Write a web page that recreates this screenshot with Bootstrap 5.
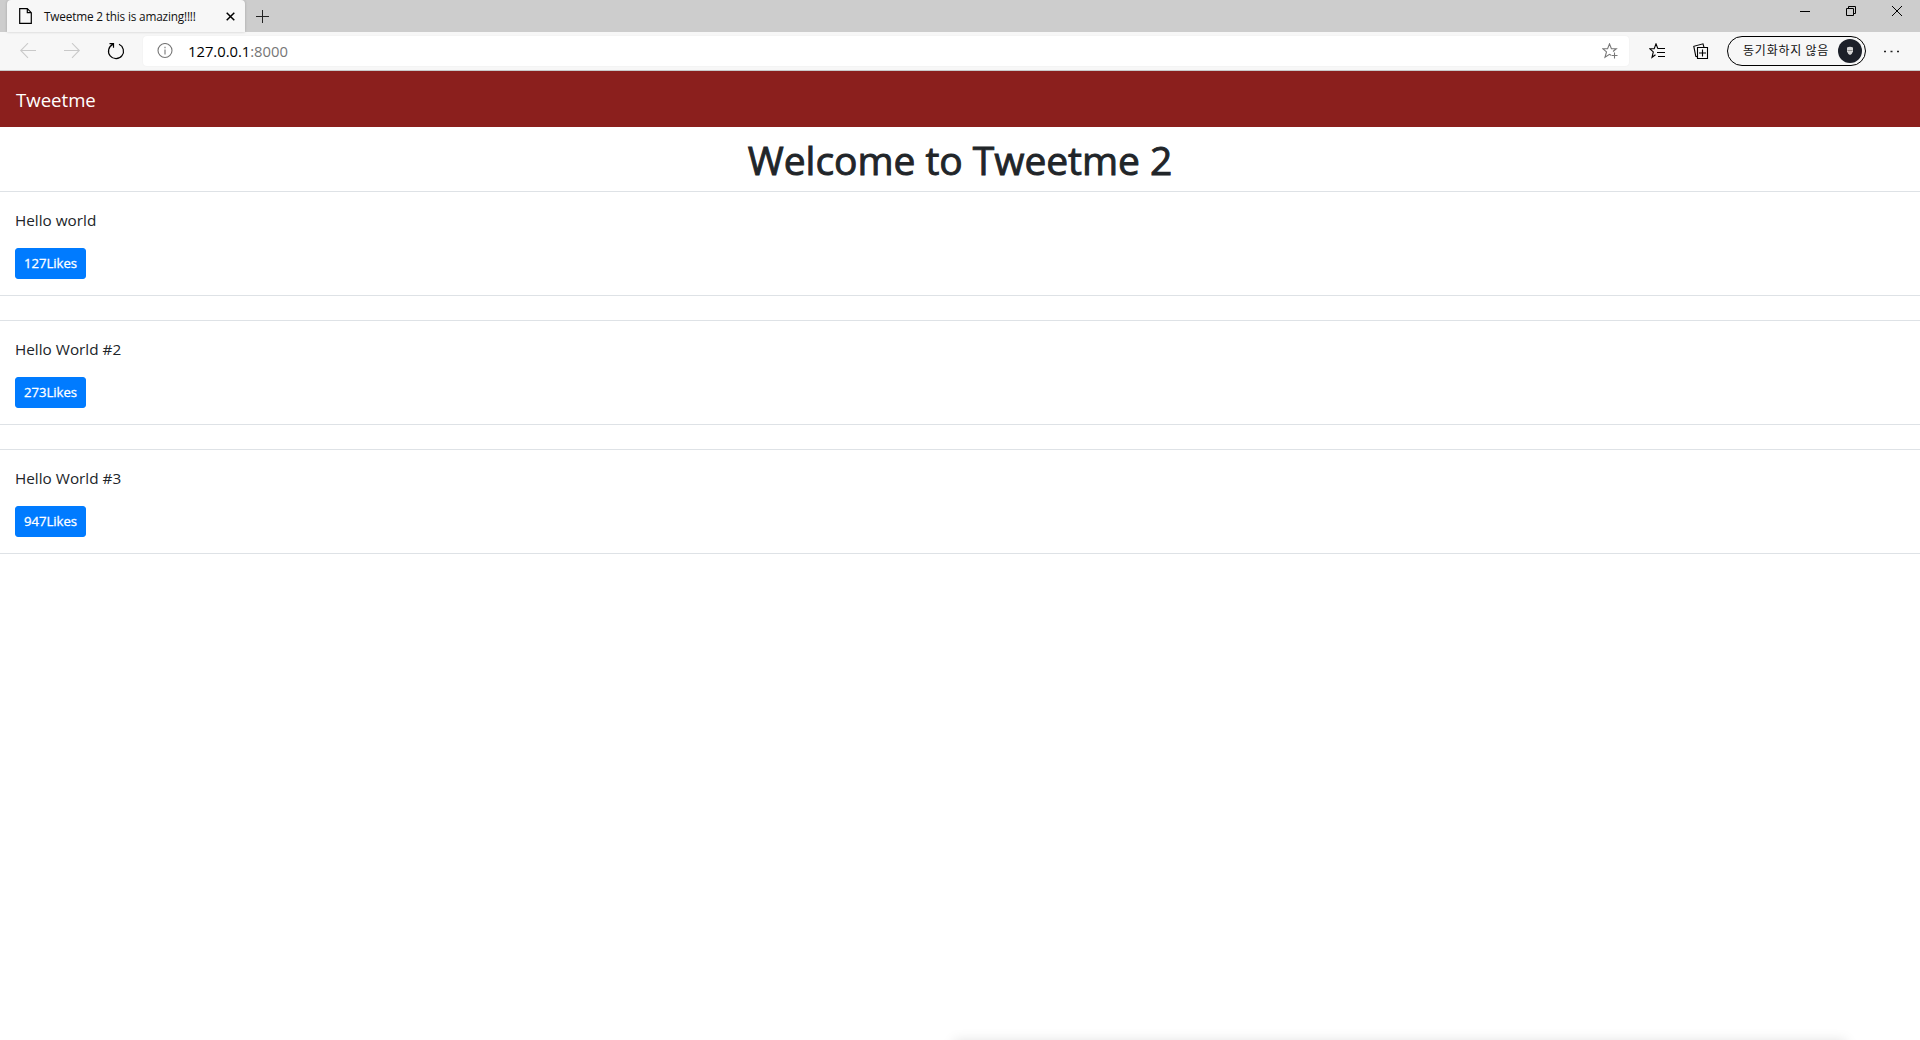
<!DOCTYPE html>
<html lang="en">
<head>
<meta charset="utf-8">
<title>Tweetme 2 this is amazing!!!!</title>
<link href="https://cdn.jsdelivr.net/npm/bootstrap@5.3.0/dist/css/bootstrap.min.css" rel="stylesheet">
<style>
body{font-family:"Open Sans","Noto Sans","Noto Sans CJK KR",sans-serif;color:#212529;background:#fff}
svg{display:block;flex:none;fill:none;stroke:#000;stroke-width:1.1}
.screen{height:1040px}
.titlebar{height:32px;background:#cdcdcd;padding-left:7px;padding-right:18px}
.tab{width:238px;height:32px;background:#f7f7f7;border-radius:4px 4px 0 0;padding:0 10px 0 12px;box-shadow:0 0 3px rgba(0,0,0,.2)}
.tab-title{font-size:11.8px;line-height:16px;letter-spacing:-.18px;margin-left:12px;color:#111;white-space:nowrap}
.new-tab{padding-left:11px}
.win-buttons{gap:36px;height:21px}
.toolbar{height:39px;background:#f7f7f7;border-bottom:1px solid #c9c9c9;padding:0 20px 1px}
.toolbar .off{stroke:#c9c9c9}
.toolbar .muted-icon{stroke:#777}
.space-nav{margin-left:28px}
.space-reload{margin-left:27px}
.space-fav{margin-left:20px}
.space-more{margin-left:18px}
.address{width:1487px;height:30px;background:#fff;border-radius:4px;margin-left:18px;padding:0 11px 0 14px;box-shadow:0 0 2px rgba(0,0,0,.06)}
.url{font-size:14.8px;line-height:20px;letter-spacing:-.02px;margin-left:15px;padding-top:1px;color:#000;white-space:nowrap}
.url span{color:#767676}
.profile{width:139px;height:30px;border:1px solid #000;border-radius:15px;padding:0 3px 0 15px;margin-left:18px}
.profile-text{font:400 12px/18px "Noto Sans CJK KR",sans-serif;letter-spacing:.75px;padding-bottom:1px;color:#111;white-space:nowrap}
.brandbar{height:56px;background:#8b1f1d;padding:2px 16px 0}
.brandbar .navbar-brand{font-size:18.6px;line-height:30px;color:#fff;padding:0}
.headline{font-size:39px;font-weight:400;line-height:48px;letter-spacing:-.05px;padding:9px 0 7px;-webkit-text-stroke:.9px #212529}
.tweet{padding:16px 15px;border-color:#dee2e6!important}
.tweet p{font-size:15.3px;line-height:24px;margin-bottom:16px}
.btn-like{--bs-btn-bg:#007bff;--bs-btn-border-color:#007bff;--bs-btn-color:#fff;width:71px;height:31px;padding:1px 0 0;font-size:13.1px;border-radius:3px;white-space:nowrap;-webkit-text-stroke:.3px #fff}
.popup-edge{position:absolute;left:954px;top:1041px;width:892px;height:40px;box-shadow:0 0 12px rgba(0,0,0,.13)}
</style>
<script src="https://cdn.jsdelivr.net/npm/bootstrap@5.3.0/dist/js/bootstrap.bundle.min.js"></script>
</head>
<body>
<div class="screen position-relative overflow-hidden">
<header>
<div class="titlebar d-flex">
  <div class="tab d-flex align-items-center">
    <svg width="13" height="16" viewBox="0 0 13 16"><path d="M.7.7h7.6l4 4v10.6H.7zM8.3.7v4h4" stroke-width="1.2"/></svg>
    <span class="tab-title">Tweetme 2 this is amazing!!!!</span>
    <svg class="ms-auto" width="9" height="9" viewBox="0 0 9 9"><path d="M.7.7l7.6 7.6M8.3.7L.7 8.3" stroke-width="1.5"/></svg>
  </div>
  <div class="new-tab d-flex align-items-center"><svg width="13" height="13" viewBox="0 0 13 13"><path d="M6.5 0v13M0 6.5h13" stroke="#222" stroke-width="1"/></svg></div>
  <div class="win-buttons d-flex align-items-center ms-auto">
    <svg width="10" height="10" viewBox="0 0 10 10"><path d="M0 5.5h10" stroke-width="1"/></svg>
    <svg width="10" height="10" viewBox="0 0 10 10"><path d="M.5 2.5h7v7h-7zM2.5 2.5v-2h7v7h-2" stroke-width="1"/></svg>
    <svg width="10" height="10" viewBox="0 0 10 10"><path d="M0 0l10 10M10 0L0 10" stroke-width="1"/></svg>
  </div>
</div>
<div class="toolbar d-flex align-items-center">
  <svg class="off" width="16" height="16" viewBox="0 0 16 16"><path d="M16 7.5H1M8 .2L.7 7.5 8 14.8"/></svg>
  <svg class="off space-nav" width="16" height="16" viewBox="0 0 16 16"><path d="M0 7.5h15M8 .2l7.3 7.3L8 14.8"/></svg>
  <svg class="space-reload" width="18" height="18" viewBox="0 0 18 18"><path d="M12 2.300a7.500 7.500 0 1 1-6.200.1M2.500 1.700h4v4.100" stroke-width="1.200"/></svg>
  <div class="address d-flex align-items-center">
    <svg class="muted-icon" width="16" height="16" viewBox="0 0 16 16"><circle cx="8" cy="7.500" r="7"/><path d="M8 6.500v5M8 3.800v1.500"/></svg>
    <span class="url">127.0.0.1<span>:8000</span></span>
    <svg class="muted-icon ms-auto" width="16" height="16" viewBox="0 0 16 16"><path d="M9 12.300l-1.500-1L3 14.300l1.500-5.400L.7 5.700h4.900L7.500.9l1.900 4.800h4.900L11 8.500M12.500 9.500v6M9.500 12.500h6"/></svg>
  </div>
  <svg class="space-fav" width="16" height="16" viewBox="0 0 16 16"><path d="M6.500 11.700L3 14.300l1.300-5.400L.7 5.700h4.500L7 .9l1.900 4.800M8.900 5.500H16M8 9.500h8M9 13.500h7"/></svg>
  <svg class="space-nav" width="16" height="16" viewBox="0 0 16 16"><path d="M4.500 4.500h10v11h-10zM9.500 6.500v7M6 10h7M4 13.800l-1.200-.5L.8 3.300 10 .8l1 3.500"/></svg>
  <div class="profile d-flex align-items-center justify-content-between">
    <span class="profile-text">동기화하지 않음</span>
    <svg width="24" height="24" viewBox="0 0 24 24"><circle cx="12" cy="12" r="12" fill="#1c2029" stroke="none"/><path d="M9 8.500q3-1.500 6 0v4q-1 3-3 3.500-2-.5-3-3.500z" fill="#d5d5d5" stroke="none"/><path d="M9.500 11.500h5" stroke="#777" stroke-width=".8"/></svg>
  </div>
  <svg class="space-more" width="16" height="4" viewBox="0 0 16 4"><path d="M0 2.500h2M6.500 2.500h2M13 2.500h2" stroke-width="1.700" stroke="#222"/></svg>
</div>
</header>
<nav class="brandbar navbar"><a class="navbar-brand m-0" href="#">Tweetme</a></nav>
<main>
  <h1 class="headline text-center m-0">Welcome to Tweetme 2</h1>
  <div class="tweet border-top border-bottom mb-4"><p>Hello world</p><button class="btn btn-like d-block">127Likes</button></div>
  <div class="tweet border-top border-bottom mb-4"><p>Hello World #2</p><button class="btn btn-like d-block">273Likes</button></div>
  <div class="tweet border-top border-bottom mb-4"><p>Hello World #3</p><button class="btn btn-like d-block">947Likes</button></div>
</main>
<div class="popup-edge"></div>
</div>
</body>
</html>
